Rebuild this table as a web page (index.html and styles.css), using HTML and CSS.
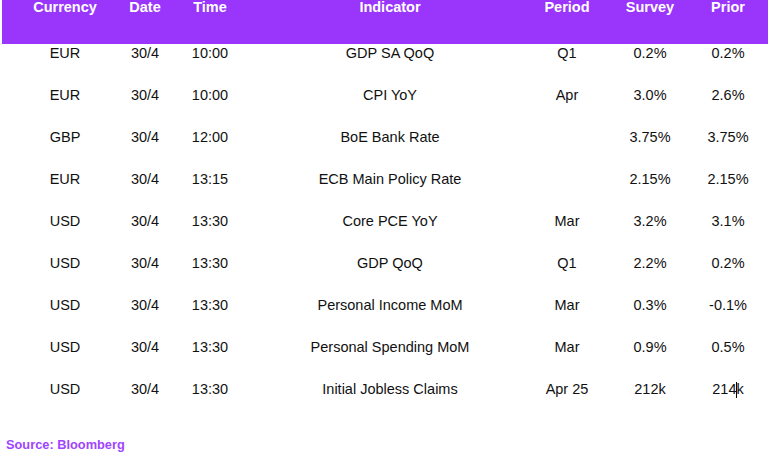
FILE: index.html
```html
<!DOCTYPE html>
<html lang="en">
<head>
    <meta charset="UTF-8">
    <title>Economic Calendar</title>
    <link rel="stylesheet" href="styles.css">
</head>
<body>
    <div class="calendar">
        <div class="row head">
            <span>Currency</span><span>Date</span><span>Time</span><span>Indicator</span><span>Period</span><span>Survey</span><span>Prior</span>
        </div>
        <div class="row">
            <span>EUR</span><span>30/4</span><span>10:00</span><span>GDP SA QoQ</span><span>Q1</span><span>0.2%</span><span>0.2%</span>
        </div>
        <div class="row">
            <span>EUR</span><span>30/4</span><span>10:00</span><span>CPI YoY</span><span>Apr</span><span>3.0%</span><span>2.6%</span>
        </div>
        <div class="row">
            <span>GBP</span><span>30/4</span><span>12:00</span><span>BoE Bank Rate</span><span></span><span>3.75%</span><span>3.75%</span>
        </div>
        <div class="row">
            <span>EUR</span><span>30/4</span><span>13:15</span><span>ECB Main Policy Rate</span><span></span><span>2.15%</span><span>2.15%</span>
        </div>
        <div class="row">
            <span>USD</span><span>30/4</span><span>13:30</span><span>Core PCE YoY</span><span>Mar</span><span>3.2%</span><span>3.1%</span>
        </div>
        <div class="row">
            <span>USD</span><span>30/4</span><span>13:30</span><span>GDP QoQ</span><span>Q1</span><span>2.2%</span><span>0.2%</span>
        </div>
        <div class="row">
            <span>USD</span><span>30/4</span><span>13:30</span><span>Personal Income MoM</span><span>Mar</span><span>0.3%</span><span>-0.1%</span>
        </div>
        <div class="row">
            <span>USD</span><span>30/4</span><span>13:30</span><span>Personal Spending MoM</span><span>Mar</span><span>0.9%</span><span>0.5%</span>
        </div>
        <div class="row">
            <span>USD</span><span>30/4</span><span>13:30</span><span>Initial Jobless Claims</span><span>Apr 25</span><span>212k</span><span>214<i class="caret"></i>k</span>
        </div>
    </div>

    <p class="source">Source: Bloomberg</p>
</body>
</html>
```

FILE: styles.css
```css
/* calendar table */
body {
    margin: 0;
    background: #ffffff;
    font-family: "Liberation Sans", Arial, sans-serif;
    font-size: 14.5px;
    color: #111111;
}

.calendar {
    margin: 0 2px;
}

.row {
    display: grid;
    grid-template-columns: 126px 34px 96px 264px 90px 76px 80px;
    justify-items: center;
    align-items: start;
    height: 42px;
    padding-top: 1px;
    box-sizing: border-box;
}

.row span {
    white-space: nowrap;
}

.head {
    height: 44px;
    padding-top: 0;
    background: #9a36fb;
    color: #ffffff;
    font-weight: bold;
}

.head span {
    margin-top: -1px;
}

.caret {
    display: inline-block;
    width: 1px;
    height: 16px;
    margin: 0 -1px 0 0;
    vertical-align: -4px;
    background: #000000;
}

.source {
    margin: 15px 0 0 6px;
    font-size: 12.8px;
    font-weight: bold;
    color: #a044ff;
}
```
